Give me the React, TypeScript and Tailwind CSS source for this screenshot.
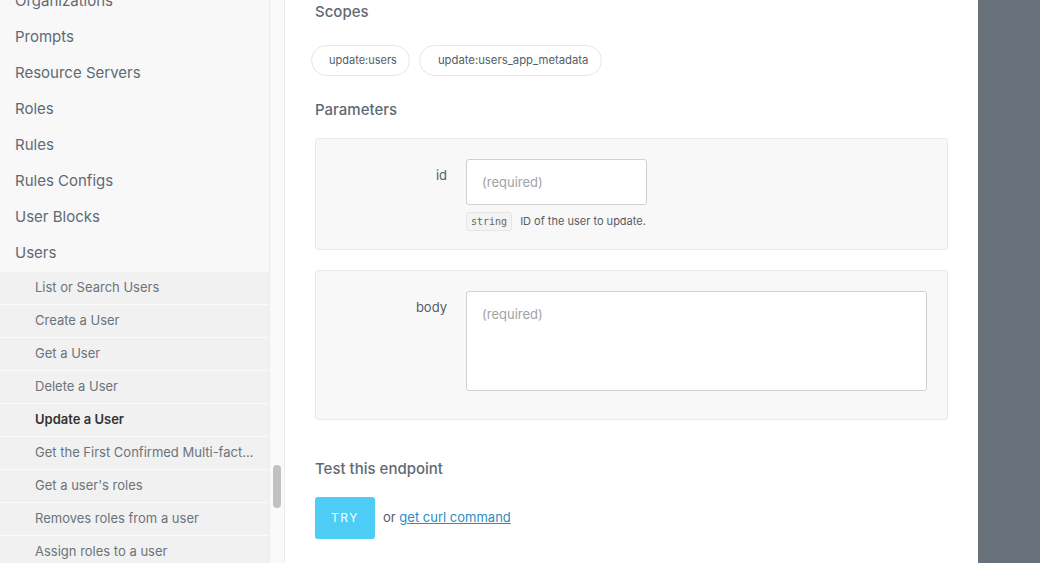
import React from "react";

const topItems = ["Organizations", "Prompts", "Resource Servers", "Roles", "Rules", "Rules Configs", "User Blocks", "Users"];

const subItems = [
  "List or Search Users",
  "Create a User",
  "Get a User",
  "Delete a User",
  "Update a User",
  "Get the First Confirmed Multi-fact...",
  "Get a user's roles",
  "Removes roles from a user",
  "Assign roles to a user",
];

function Sidebar() {
  return (
    <div className="w-[270px] shrink-0 bg-[#f8f8f8] border-r border-[#ececec] h-full overflow-hidden flex flex-col">
      <div className="flex flex-col -mt-[17px]">
        {topItems.map((name) => (
          <div key={name} className="h-[36px] flex items-center px-[15px] text-[15px] text-[#5f6a74]">
            {name}
          </div>
        ))}
      </div>
      <div className="flex flex-col bg-[#f1f1f1] mt-[1px]">
        {subItems.map((name) => (
          <div
            key={name}
            className={`h-[33px] flex items-center pl-[35px] text-[13px] border-b border-[#fbfbfb] ${
              name === "Update a User" ? "text-[#333] font-semibold" : "text-[#6b737b]"
            }`}
          >
            {name}
          </div>
        ))}
      </div>
    </div>
  );
}

function Scrollbar() {
  return (
    <div className="w-[15px] shrink-0 bg-[#fafafa] border-r border-[#ececec] h-full flex flex-col items-center pt-[465px]">
      <div className="w-[8px] h-[43px] rounded-full bg-[#c1c1c1]" />
    </div>
  );
}

function Heading({ children }: { children: React.ReactNode }) {
  return <div className="text-[15px] font-medium text-[#5f6a74]">{children}</div>;
}

function ParamCard({ label, tall, hint }: { label: string; tall?: boolean; hint?: boolean }) {
  return (
    <div
      className={`bg-[#f8f8f8] border border-[#e9e9e9] rounded-[3px] flex pt-[20px] ${
        hint ? "pb-[18px]" : "pb-[28px]"
      }`}
    >
      <div className="w-[131px] text-right text-[13px] text-[#555d66] pt-[7px]">{label}</div>
      <div className="ml-[19px] flex flex-col">
        {tall ? (
          <textarea
            placeholder="(required)"
            className="w-[461px] h-[100px] bg-white border border-[#d0d0d0] rounded-[3px] px-[15px] py-[13px] text-[13px] text-[#999] placeholder:text-[#a3a3a3] resize-none outline-none"
          />
        ) : (
          <input
            placeholder="(required)"
            className="w-[181px] h-[46px] bg-white border border-[#d0d0d0] rounded-[3px] px-[15px] text-[13px] placeholder:text-[#a3a3a3] outline-none"
          />
        )}
        {hint && (
          <div className="flex items-center gap-[8px] mt-[7px] text-[11px] text-[#555d66]">
            <span className="font-['DejaVu_Sans_Mono',monospace] text-[10px] text-[#666] bg-[#f4f4f4] border border-[#e6e6e6] rounded-[3px] px-[4px] py-[1px]">
              string
            </span>
            ID of the user to update.
          </div>
        )}
      </div>
    </div>
  );
}

export default function App() {
  return (
    <div className="w-[1040px] h-[563px] flex overflow-hidden font-['Inter',sans-serif] bg-white">
      <Sidebar />
      <Scrollbar />
      <div className="w-[693px] shrink-0 h-full pl-[30px] pr-[30px] pt-[1px] flex flex-col">
        <Heading>Scopes</Heading>
        <div className="flex gap-[9px] mt-[21px] -ml-[4px]">
          <span className="h-[31px] pl-[17px] pr-[12px] flex items-center rounded-full border border-[#e6e6e6] text-[11px] text-[#555d66]">
            update:users
          </span>
          <span className="h-[31px] pl-[18px] pr-[13px] flex items-center rounded-full border border-[#e6e6e6] text-[11.3px] text-[#555d66]">
            update:users_app_metadata
          </span>
        </div>
        <div className="mt-[23px]">
          <Heading>Parameters</Heading>
        </div>
        <div className="mt-[17px] flex flex-col gap-[20px]">
          <ParamCard label="id" hint />
          <ParamCard label="body" tall />
        </div>
        <div className="mt-[38px]">
          <Heading>Test this endpoint</Heading>
        </div>
        <div className="flex items-center mt-[16px] gap-[8px]">
          <button className="w-[60px] h-[42px] rounded-[3px] bg-[#4dccf6] text-white text-[12px] tracking-[1.5px]">
            TRY
          </button>
          <span className="text-[13px] text-[#555d66]">
            or <a className="text-[#2e8bc4] underline">get curl command</a>
          </span>
        </div>
      </div>
      <div className="flex-1 h-full bg-[#68717a]" />
    </div>
  );
}
